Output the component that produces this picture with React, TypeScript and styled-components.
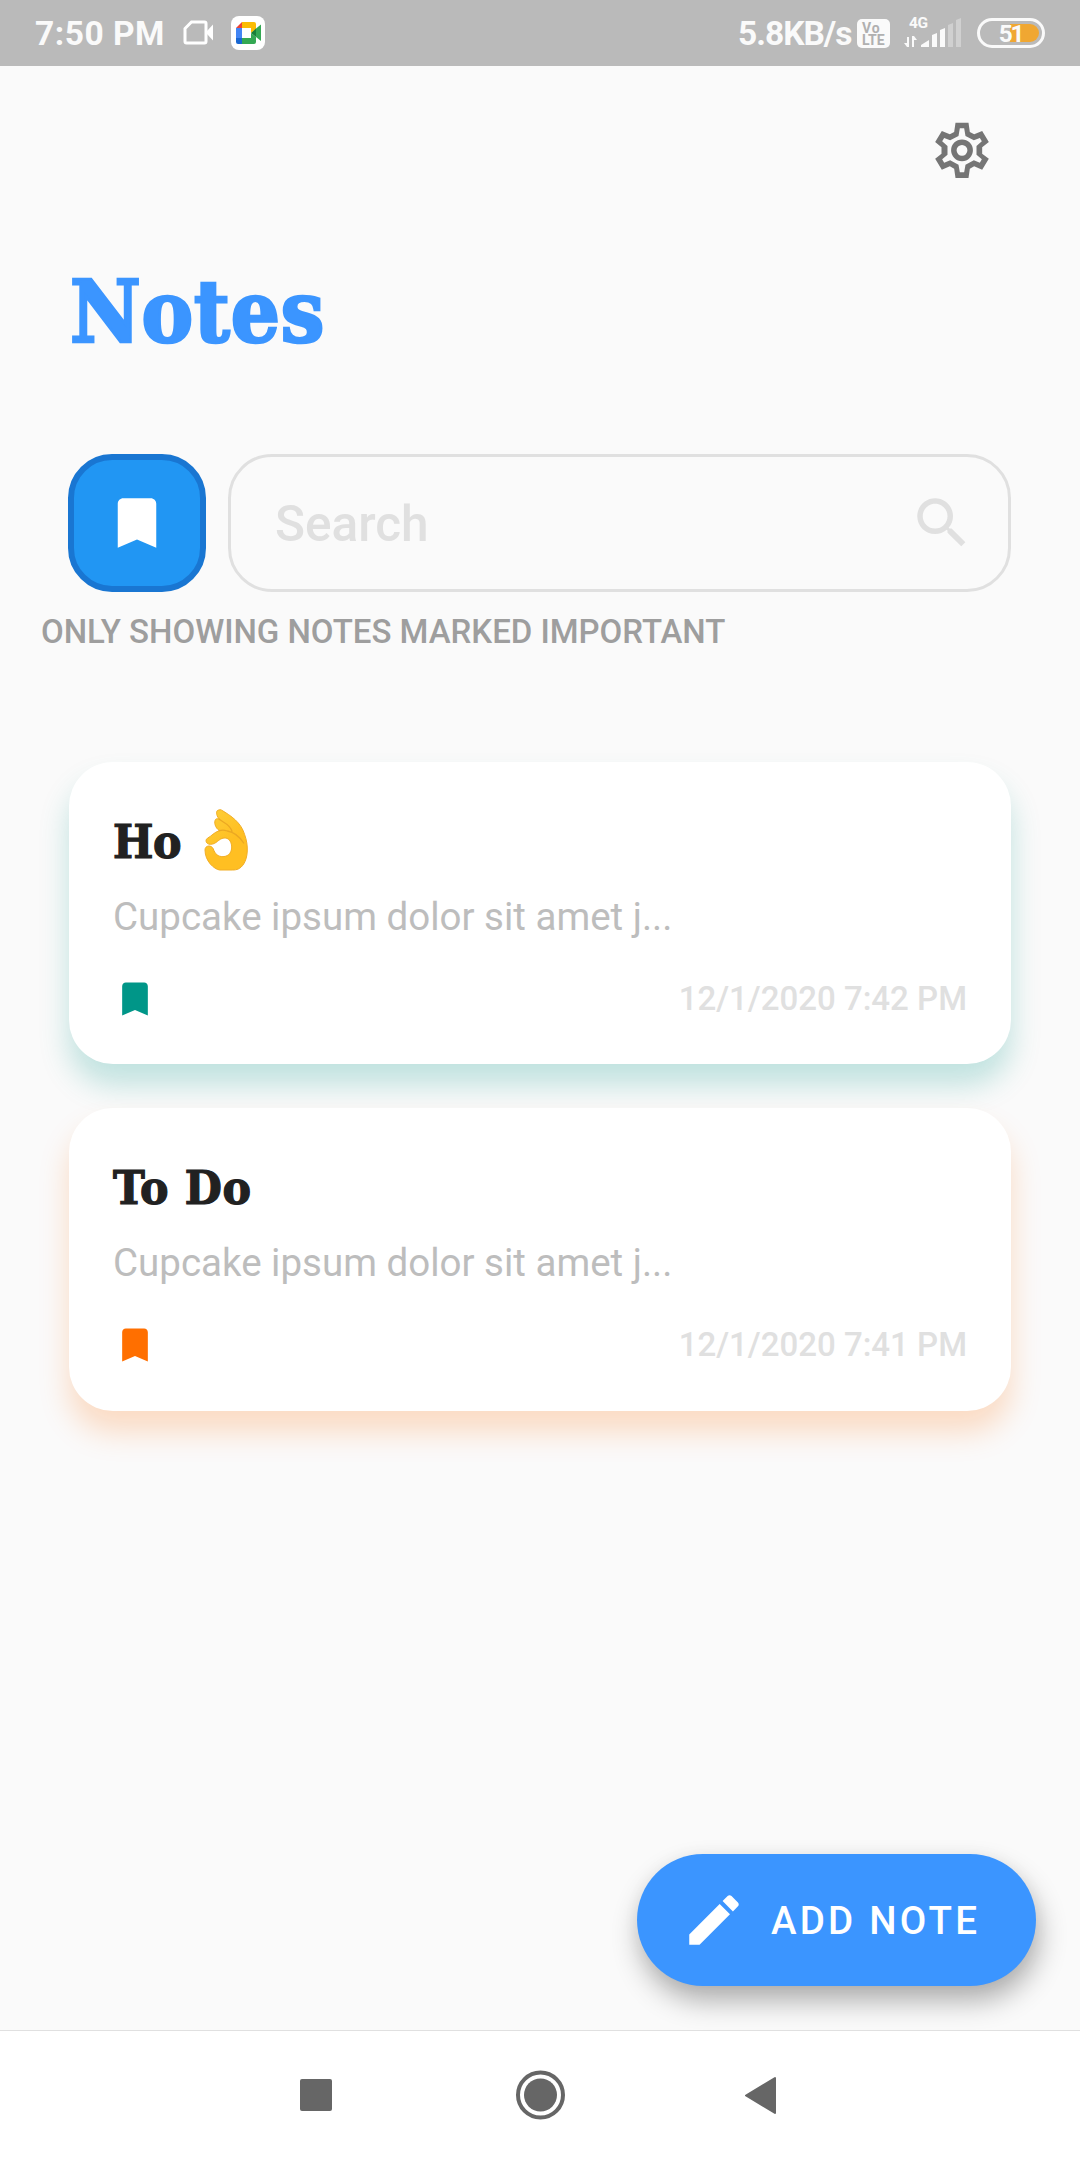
import React from "react";
import styled, { createGlobalStyle } from "styled-components";

const GlobalStyle = createGlobalStyle`
  * { box-sizing: border-box; }
  body { margin: 0; background: #fafafa; font-family: Roboto, "Liberation Sans", sans-serif; }
`;

const Screen = styled.div`
  position: relative;
  display: flex;
  flex-direction: column;
  width: 1080px;
  height: 2160px;
  background: #fafafa;
  overflow: hidden;
`;

const StatusBar = styled.div`
  display: flex;
  align-items: center;
  height: 66px;
  padding: 0 35px;
  background: #bababa;
  color: #fafafa;
`;

const StatusText = styled.span<{ $width: number; $spacing: number }>`
  width: ${(p) => p.$width}px;
  padding-top: 2px;
  font-size: 33.5px;
  font-weight: 700;
  line-height: 66px;
  letter-spacing: ${(p) => p.$spacing}px;
  white-space: nowrap;
`;

const CameraIcon = styled.svg`
  margin-left: 18px;
`;

const MeetIcon = styled.svg`
  margin-left: 17px;
`;

const StatusRight = styled.div`
  display: flex;
  align-items: center;
  margin-left: auto;
`;

const VolteBadge = styled.div`
  display: grid;
  grid-template-rows: 12px 13px;
  width: 33px;
  height: 29px;
  margin-left: 6px;
  padding: 3px 0 1px 5px;
  border-radius: 5px;
  background: #fafafa;
  color: #b0b0b0;
  font-size: 14px;
  font-weight: 700;
  line-height: 12px;
`;

const VoLabel = styled.span`
  letter-spacing: 0.8px;
`;

const LteLabel = styled.span`
  line-height: 13px;
`;

const Signal = styled.div`
  display: flex;
  flex-direction: column;
  width: 58px;
  height: 32px;
  margin-left: 14px;
`;

const SignalLabel = styled.span`
  height: 12px;
  padding-left: 5px;
  font-size: 15.5px;
  font-weight: 700;
  line-height: 13px;
  letter-spacing: -0.4px;
`;

const SignalBars = styled.svg`
  margin-top: -11px;
`;

const Battery = styled.div`
  position: relative;
  isolation: isolate;
  display: flex;
  align-items: center;
  justify-content: center;
  width: 68px;
  height: 30px;
  margin-left: 15px;
  padding: 1px 1px 0 0;
  border: 3px solid #fafafa;
  border-radius: 15px;
  font-size: 24.5px;
  font-weight: 700;
  line-height: 24px;
  letter-spacing: -2.4px;

  &::before {
    content: "";
    position: absolute;
    z-index: -1;
    top: 3px;
    right: 3px;
    width: 29px;
    height: 18px;
    border-radius: 0 9px 9px 0;
    background: #f0a732;
  }
`;

const Toolbar = styled.div`
  display: flex;
  justify-content: flex-end;
  height: 117px;
  padding: 51px 85.5px 0 0;
`;

const GearButton = styled.button`
  display: flex;
  width: 66px;
  height: 66px;
  padding: 0;
  border: 0;
  background: none;
`;

const Slab = styled.h1`
  margin: 0;
  font-family: "DejaVu Serif Condensed", "DejaVu Serif", serif;
  font-stretch: condensed;
  font-weight: 700;
`;

const PageTitle = styled(Slab)`
  margin: 74px 0 0 70px;
  font-size: 86px;
  line-height: 110px;
  letter-spacing: 0.9px;
  color: #3b95ff;
  -webkit-text-stroke: 2.6px #3b95ff;
`;

const FilterRow = styled.div`
  display: flex;
  gap: 22px;
  margin-top: 87px;
  padding: 0 69px 0 68px;
`;

const ImportantToggle = styled.button`
  display: flex;
  align-items: center;
  justify-content: center;
  width: 138px;
  height: 138px;
  padding: 0;
  border: 6px solid #1976d2;
  border-radius: 44px;
  background: #2196f3;
  color: #fff;
`;

const SearchBox = styled.div`
  display: flex;
  flex: 1;
  align-items: center;
  justify-content: space-between;
  height: 138px;
  padding: 0 33px 0 44px;
  border: 3px solid #e0e0e0;
  border-radius: 44px;
  color: #e0e0e0;
`;

const Placeholder = styled.span`
  padding-top: 2px;
  font-size: 49.5px;
  font-weight: 500;
`;

const Hint = styled.p`
  margin: 18px 0 0 41px;
  font-size: 33px;
  font-weight: 500;
  line-height: 44px;
  letter-spacing: -0.03px;
  color: #9e9e9e;
`;

const NoteList = styled.div`
  display: flex;
  flex-direction: column;
  gap: 44px;
  margin: 108px 69px 0;
`;

const Card = styled.article<{ $shadow: string }>`
  height: 302.4px;
  padding: 46px 44px 0;
  border-radius: 44px;
  background: #fff;
  box-shadow: 0 21px 30px ${(p) => p.$shadow};
`;

const CardTitle = styled(Slab)<{ $spacing: number }>`
  display: flex;
  align-items: center;
  height: 66px;
  font-size: 47.5px;
  line-height: 65px;
  letter-spacing: ${(p) => p.$spacing}px;
  color: #212121;
  -webkit-text-stroke: 1.2px #212121;
`;

const Excerpt = styled.p`
  margin: 18px 0 0;
  font-size: 38.5px;
  line-height: 50px;
  color: #bdbdbd;
`;

const CardFooter = styled.div`
  display: flex;
  align-items: center;
  justify-content: space-between;
  height: 44px;
  margin: 34.5px 0 0 -0.5px;
`;

const Stamp = styled.time`
  font-size: 33px;
  font-weight: 500;
  line-height: 44px;
  color: #e0e0e0;
`;

const AddButton = styled.button`
  position: absolute;
  right: 44px;
  bottom: 174px;
  display: flex;
  align-items: center;
  gap: 24px;
  width: 399px;
  height: 132px;
  padding: 0 0 0 44px;
  border: 0;
  border-radius: 66px;
  background: #3b95ff;
  color: #fff;
  font-family: inherit;
  font-size: 38.5px;
  font-weight: 500;
  letter-spacing: 3.2px;
  white-space: nowrap;
  box-shadow: 3px 15px 28px rgba(0, 0, 0, 0.3), 0 2px 18px rgba(0, 0, 0, 0.04);
`;

const NavBar = styled.nav`
  display: grid;
  grid-template-columns: 50px 50px 50px;
  justify-content: center;
  align-items: center;
  gap: 173px;
  height: 130px;
  margin-top: auto;
  padding-bottom: 2px;
  border-top: 1px solid #e0e0e0;
  background: #fff;
`;

const OkHand = styled.svg`
  margin: -3px 0 0 22px;
`;

const BOOKMARK = "M17 3H7c-1.1 0-2 .9-2 2v16l7-3 7 3V5c0-1.1-.9-2-2-2z";
const SEARCH =
  "M15.5 14h-.79l-.28-.27C15.41 12.59 16 11.11 16 9.5 16 5.91 13.09 3 9.5 3S3 5.91 3 9.5 5.91 16 9.5 16c1.61 0 3.09-.59 4.23-1.57l.27.28v.79l5 4.99L20.49 19l-4.99-5zm-6 0C7.01 14 5 11.99 5 9.5S7.01 5 9.5 5 14 7.01 14 9.5 11.99 14 9.5 14z";
const EDIT =
  "M3 17.25V21h3.75L17.81 9.94l-3.75-3.75L3 17.25zM20.71 7.04c.39-.39.39-1.02 0-1.41l-2.34-2.34c-.39-.39-1.02-.39-1.41 0l-1.83 1.83 3.75 3.75 1.83-1.83z";

const Glyph = ({ size, color = "currentColor", d }: { size: number; color?: string; d: string }) => (
  <svg width={size} height={size} viewBox="0 0 24 24" fill={color}>
    <path d={d} />
  </svg>
);

const GearIcon = () => (
  <svg width="66" height="66" viewBox="145.5 80 198 198">
    <path
      fill="#757575"
      fillRule="evenodd"
      d="M225 97H264L268 125L281 132L305 122L325 155L305 171V190L325 205L305 238L281 228L268 235L264 263H225L221 235L208 228L184 238L164 205L183 190V171L164 155L184 122L208 132L221 125Z
         M238 114L234 137L209 150L191 143L185 153L201 167V193L185 207L191 217L209 210L234 223L238 246H251L255 223L280 210L298 217L304 207L288 193V167L304 153L298 143L280 150L255 137L251 114Z"
    />
    <circle cx="244.5" cy="180" r="24.5" fill="none" stroke="#757575" strokeWidth="16.5" />
  </svg>
);

const OkHandEmoji = () => (
  <OkHand width="46" height="64" viewBox="490 202 138 192" role="img" aria-label="OK hand">
    <defs>
      <linearGradient id="skin" x1="0" y1="0" x2="0.6" y2="1">
        <stop offset="0" stopColor="#fdd03b" />
        <stop offset="0.65" stopColor="#ffbf22" />
      </linearGradient>
    </defs>
    <path
      d="M545 208C575 226 604 245 615 282C627 315 625 350 612 370C602 385 592 388 578 388H540C524 386 496 362 496 328C496 313 516 312 521 325C526 340 535 348 550 348C569 347 577 333 576 316C574 300 566 291 553 292C536 294 531 311 512 311C500 311 495 299 503 293C516 286 523 275 539 270C526 261 522 244 528 236C532 232 537 235 540 237C529 225 527 208 538 208Q541 206 545 208Z"
      fill="url(#skin)"
      stroke="#f1ad25"
      strokeWidth="3"
      strokeLinejoin="round"
    />
    <path
      d="M538 235C550 246 570 249 577 272M539 270Q550 266 563 271Q592 276 612 307"
      fill="none"
      stroke="#eba823"
      strokeWidth="4"
      strokeLinecap="round"
    />
  </OkHand>
);

type Note = {
  title: string;
  spacing: number;
  emoji?: boolean;
  text: string;
  date: string;
  color: string;
  shadow: string;
};

const notes: Note[] = [
  {
    title: "Ho",
    spacing: -0.4,
    emoji: true,
    text: "Cupcake ipsum dolor sit amet j...",
    date: "12/1/2020 7:42 PM",
    color: "#009688",
    shadow: "rgba(0, 150, 136, 0.235)",
  },
  {
    title: "To Do",
    spacing: 0.7,
    text: "Cupcake ipsum dolor sit amet j...",
    date: "12/1/2020 7:41 PM",
    color: "#ff6f00",
    shadow: "rgba(255, 111, 0, 0.22)",
  },
];

const NoteCard = ({ note }: { note: Note }) => (
  <Card $shadow={note.shadow}>
    <CardTitle as="h2" $spacing={note.spacing}>
      {note.title}
      {note.emoji && <OkHandEmoji />}
    </CardTitle>
    <Excerpt>{note.text}</Excerpt>
    <CardFooter>
      <Glyph size={44} color={note.color} d={BOOKMARK} />
      <Stamp>{note.date}</Stamp>
    </CardFooter>
  </Card>
);

export default function App() {
  return (
    <Screen>
      <GlobalStyle />
      <StatusBar>
        <StatusText $width={130} $spacing={0.5}>7:50 PM</StatusText>
        <CameraIcon width="31" height="26" viewBox="0 0 31 26">
          <path d="M8.5 2H21.5Q23 2 23 3.5V21.5Q23 23 21.5 23H3.5Q2 23 2 21.5V8.5Z" fill="none" stroke="#fff" strokeWidth="3" />
          <path d="M24 11L30 4.5V20.5L24 14Z" fill="#fff" />
        </CameraIcon>
        <MeetIcon width="34" height="34" viewBox="0 0 34 34">
          <rect width="34" height="34" rx="8" fill="#fff" />
          <path d="M5 12L11 6V12Z" fill="#e94235" />
          <path d="M11 6H23Q25 6 25 8V13L20 17V12H11Z" fill="#fbbc04" />
          <path d="M5 12H11V22H5Z" fill="#4285f4" />
          <path d="M5 22H11V28H7Q5 28 5 26Z" fill="#1967d2" />
          <path d="M11 22H20V17L25 21V26Q25 28 23 28H11Z" fill="#34a853" />
          <path d="M20 17L25 12.5V21Z" fill="#188038" />
          <path d="M25 12.5L30 8.5V25L25 21Z" fill="#34a853" />
        </MeetIcon>
        <StatusRight>
          <StatusText $width={113} $spacing={-1}>5.8KB/s</StatusText>
          <VolteBadge>
            <VoLabel>Vo</VoLabel>
            <LteLabel>LTE</LteLabel>
          </VolteBadge>
          <Signal>
            <SignalLabel>4G</SignalLabel>
            <SignalBars width="58" height="30" viewBox="0 0 58 30" fill="#fafafa">
              <path d="M3 19H5V29H3ZM0 25H3V29ZM8 18H10V29H8ZM10 18L13 22H10Z" />
              <path d="M17 27L25 22V29H17ZM28 17L33 15V29H28ZM36 12L41 10V29H36Z" />
              <path d="M44 7L49 5V29H44ZM52 2L57 0V29H52Z" fill="#d0d0d0" />
            </SignalBars>
          </Signal>
          <Battery>51</Battery>
        </StatusRight>
      </StatusBar>
      <Toolbar>
        <GearButton aria-label="Settings">
          <GearIcon />
        </GearButton>
      </Toolbar>
      <PageTitle>Notes</PageTitle>
      <FilterRow>
        <ImportantToggle aria-label="Important">
          <Glyph size={66} d={BOOKMARK} />
        </ImportantToggle>
        <SearchBox>
          <Placeholder>Search</Placeholder>
          <Glyph size={66} d={SEARCH} />
        </SearchBox>
      </FilterRow>
      <Hint>ONLY SHOWING NOTES MARKED IMPORTANT</Hint>
      <NoteList>
        {notes.map((note) => (
          <NoteCard key={note.title} note={note} />
        ))}
      </NoteList>
      <AddButton>
        <Glyph size={66} d={EDIT} />
        ADD NOTE
      </AddButton>
      <NavBar>
        <svg width="50" height="50" viewBox="0 0 50 50" fill="#666">
          <rect x="8" y="9" width="32" height="32" rx="2" />
        </svg>
        <svg width="50" height="50" viewBox="0 0 50 50" fill="#666">
          <circle cx="25.5" cy="25" r="22.5" fill="none" stroke="#666" strokeWidth="4" />
          <circle cx="25.5" cy="25" r="16.5" />
        </svg>
        <svg width="50" height="50" viewBox="0 0 50 50" fill="#666">
          <path d="M8 25.5L37 8V43Z" stroke="#666" strokeWidth="2" strokeLinejoin="round" />
        </svg>
      </NavBar>
    </Screen>
  );
}
